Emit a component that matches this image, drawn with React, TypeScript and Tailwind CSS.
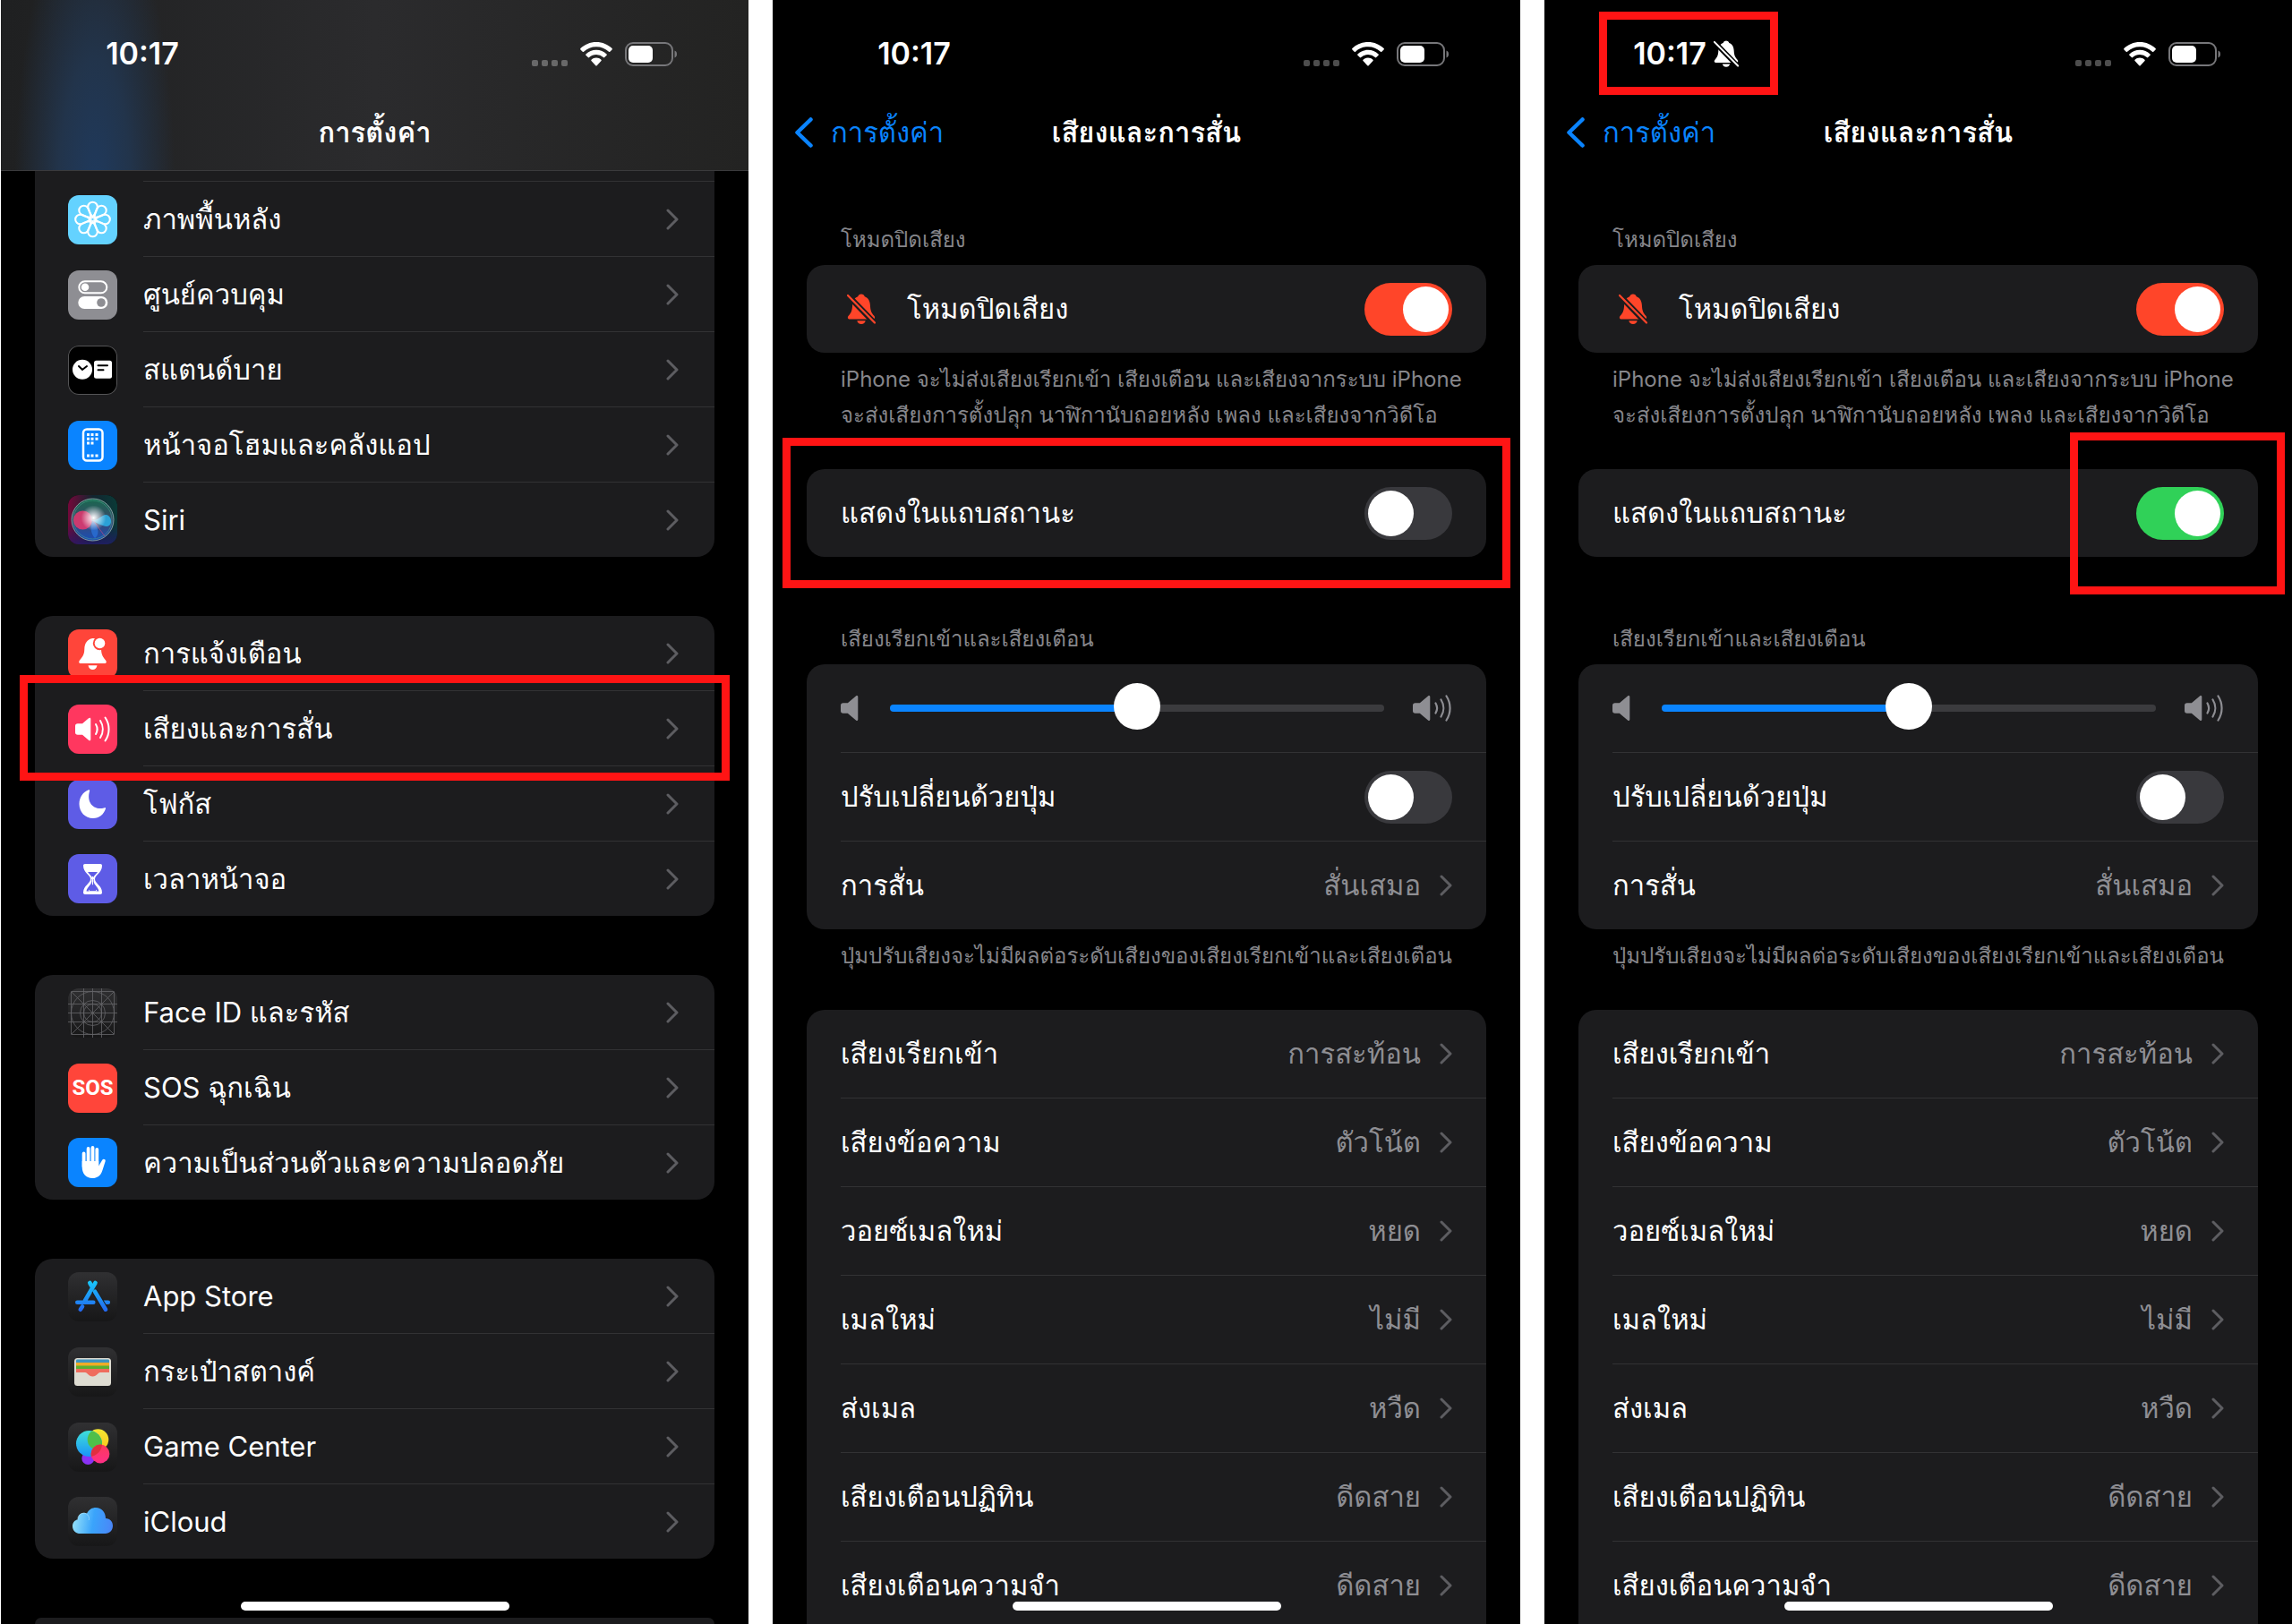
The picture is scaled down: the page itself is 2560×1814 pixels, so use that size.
import { useId, type ReactNode } from "react"
import { clsx } from "clsx"

type Children = { children: ReactNode }

// ---------- Status bar / shared icons ----------

const BellSlash = ({ className }: { className?: string }) => {
    const id = useId()
    return (
        <svg viewBox="0 0 32 34" className={className} aria-hidden="true">
            <mask id={id}>
                <rect width="32" height="34" fill="#fff" />
                <path d="M0 1 31 33" stroke="#000" strokeWidth="6.4" />
            </mask>
            <g mask={`url(#${id})`} fill="currentColor">
                <path d="M16 .5c1.900 0 3.400 1.200 3.800 2.800 4.200 1.500 5.900 5.400 6.100 9.700.3 6 1.500 8.500 4.200 11.500 1.800 2 1.100 4-1.400 4H3.300c-2.500 0-3.200-2-1.400-4C4.600 21.500 5.800 19 6.100 13c.2-4.300 1.900-8.200 6.100-9.700C12.600 1.700 14.100.5 16 .5Z" />
            </g>
            <path d="M11.300 30.200h9.400c-.4 2.300-2.300 3.700-4.700 3.700s-4.300-1.400-4.700-3.700Z" fill="currentColor" />
            <path d="M1 2 31 32.500" stroke="currentColor" strokeWidth="2.300" strokeLinecap="round" />
        </svg>
    )
}

const Wifi = () => (
    <svg viewBox="0 0 36 27" className="h-[27px] w-9" fill="#fff" aria-hidden="true">
        <path d="M18 0c6.900 0 13.100 2.700 17.600 7.100.4.4.4.9 0 1.300l-2.300 2.300c-.4.4-.9.4-1.300 0C28.300 7.200 23.400 5.200 18 5.200S7.700 7.200 4 10.700c-.4.4-.9.4-1.300 0L.4 8.400c-.4-.4-.4-.9 0-1.300C4.900 2.700 11.100 0 18 0Z" />
        <path d="M18 8.800c4.500 0 8.600 1.800 11.600 4.600.4.4.4.9 0 1.300l-2.400 2.400c-.4.4-.9.4-1.300 0A11.600 11.600 0 0 0 18 14c-3 0-5.800 1.200-7.900 3.100-.4.4-.9.4-1.300 0l-2.400-2.400c-.4-.4-.4-.9 0-1.300C9.400 10.600 13.500 8.800 18 8.800Z" />
        <path d="M18 17.600c2.100 0 4 .8 5.500 2.100.4.400.4.900 0 1.300l-4.800 5.300c-.4.400-1 .400-1.400 0L12.500 21c-.4-.4-.4-.9 0-1.300 1.500-1.300 3.400-2.100 5.500-2.100Z" />
    </svg>
)

const Battery = () => (
    <svg viewBox="0 0 58 27" className="h-[27px] w-[58px]" aria-hidden="true">
        <rect x="1" y="1" width="52" height="25" rx="8" fill="none" stroke="#77777a" strokeWidth="2" />
        <path d="M55.500 9.500c2 .7 2.500 2.300 2.500 4s-.5 3.300-2.500 4Z" fill="#77777a" />
        <rect x="4" y="4" width="27" height="19" rx="5" fill="#fff" />
    </svg>
)

const Chevron = () => (
    <svg viewBox="0 0 14 24" className="h-6 w-3.5 shrink-0" fill="none" stroke="#5d5d61" strokeWidth="3" strokeLinecap="round" strokeLinejoin="round" aria-hidden="true">
        <path d="m2 2 10 10L2 22" />
    </svg>
)

const Speaker = () => (
    <svg viewBox="0 0 20 28" className="h-7 w-5 shrink-0" fill="#8e8e93" aria-hidden="true">
        <path d="M0 11c0-1.800 1-2.800 2.800-2.800h5L17 .6c1.200-1 2.300-.4 2.300 1v24.800c0 1.400-1.100 2-2.300 1l-9.200-7.600h-5C1 19.800 0 18.800 0 17Z" />
    </svg>
)

const SpeakerLoud = () => (
    <svg viewBox="0 0 44 30" className="h-[30px] w-11 shrink-0" fill="#8e8e93" aria-hidden="true">
        <path d="M0 12c0-1.800 1-2.800 2.800-2.800h5L17 1.600c1.200-1 2.300-.4 2.300 1v24.800c0 1.400-1.100 2-2.300 1l-9.200-7.600h-5C1 20.800 0 19.800 0 18Z" />
        <g fill="none" stroke="#8e8e93" strokeWidth="2.200" strokeLinecap="round">
            <path d="M25.500 9.500c2 3.400 2 7.600 0 11M31.500 5.500c3.700 5.800 3.700 13.200 0 19M37.500 1.500c5.400 8.200 5.400 18.800 0 27" />
        </g>
    </svg>
)

// ---------- App icons, all on a 55 unit grid ----------

const Glyph = ({ children }: Children) => (
    <svg viewBox="0 0 55 55" className="size-full" aria-hidden="true">{children}</svg>
)

const WallpaperIcon = () => (
    <Glyph>
        <g transform="translate(27.500 27)" fill="none" stroke="#fff" strokeWidth="2.100">
            {[0, 45, 90, 135, 180, 225, 270, 315].map((a) => (
                <path key={a} transform={`rotate(${a})`} d="M0-2.500C-2.500-6-5.300-10-5.300-14a5.300 5.300 0 0 1 10.600 0C5.300-10 2.500-6 0-2.500Z" />
            ))}
        </g>
    </Glyph>
)

const ControlCenterIcon = () => (
    <Glyph>
        <rect x="12.300" y="12.300" width="31" height="13" rx="6.500" fill="none" stroke="#fff" strokeWidth="2" />
        <circle cx="19" cy="18.800" r="4.300" fill="#fff" />
        <rect x="11.300" y="29" width="33" height="14" rx="7" fill="#fff" />
        <circle cx="37" cy="36" r="4.800" fill="#8e8e93" />
    </Glyph>
)

const StandByIcon = () => (
    <Glyph>
        <circle cx="16" cy="26.700" r="11" fill="#fff" />
        <rect x="29" y="16.700" width="20" height="20" rx="2.500" fill="#fff" />
        <path d="m12 23 4 4 5-4M33.500 22.300h10.500M33.500 27.200h6" fill="none" stroke="#000" strokeWidth="2" strokeLinecap="round" />
    </Glyph>
)

const HomeScreenIcon = () => (
    <Glyph>
        <rect x="17" y="9.500" width="21.500" height="35" rx="4" fill="none" stroke="#fff" strokeWidth="2.500" />
        {[[21, 14], [25.500, 14], [30.500, 14], [21, 18.700], [25.500, 18.700], [30.500, 18.700], [21, 23.500], [25.500, 23.500], [21, 37.500], [25.500, 37.500], [30.500, 37.500]].map(([x, y]) => (
            <rect key={`${x}-${y}`} x={x} y={y} width="3" height="3" fill="#fff" />
        ))}
    </Glyph>
)

const SiriIcon = () => (
    <Glyph>
        <defs>
            <linearGradient id="siri-bg" x1="0" y1="0" x2="1" y2="0">
                <stop offset="0" stopColor="#74083a" />
                <stop offset=".5" stopColor="#12242f" />
                <stop offset="1" stopColor="#0a3a37" />
            </linearGradient>
            <linearGradient id="siri-low" x1="0" y1="0" x2="0" y2="1">
                <stop offset=".6" stopColor="#1b1464" stopOpacity="0" />
                <stop offset="1" stopColor="#231a6c" stopOpacity=".8" />
            </linearGradient>
            <radialGradient id="siri-glow">
                <stop offset="0" stopColor="#fff" />
                <stop offset=".25" stopColor="#fff" stopOpacity=".75" />
                <stop offset="1" stopColor="#fff" stopOpacity="0" />
            </radialGradient>
            <linearGradient id="siri-orb" x1="0" y1="0" x2="0" y2="1">
                <stop offset="0" stopColor="#17694e" />
                <stop offset=".5" stopColor="#3a4a6a" />
                <stop offset="1" stopColor="#1a4fb8" />
            </linearGradient>
        </defs>
        <rect width="55" height="55" fill="url(#siri-bg)" />
        <rect width="55" height="55" fill="url(#siri-low)" />
        <circle cx="27.500" cy="27.500" r="23.500" fill="url(#siri-orb)" stroke="#7d9a9c" strokeWidth="1" />
        <circle cx="27.500" cy="27.500" r="21.500" fill="none" stroke="#4fae94" strokeOpacity=".6" strokeWidth=".8" />
        <circle cx="16.500" cy="28" r="10.500" fill="#e8376f" fillOpacity=".85" />
        <path d="M26 28c8 1 12-7 17-6s7 9 3 12-12-2-20-6Z" fill="#29b0e8" fillOpacity=".85" />
        <path d="M28 28c-4 6-3 15 2 20 4-3 6-9-2-20Z" fill="#2a75e0" fillOpacity=".7" />
        <path d="M28 28 41 46" stroke="#d04a86" strokeOpacity=".6" />
        <circle cx="28.500" cy="25.500" r="14" fill="url(#siri-glow)" />
    </Glyph>
)

const NotificationsIcon = () => (
    <Glyph>
        <path d="M27.500 10c-6.500 1-9 6-9.200 12-.2 7-2.500 9-5.300 12.500-1.500 2-.7 3.500 1.300 3.500h26.400c2 0 2.800-1.500 1.300-3.500-2.800-3.500-4.700-5.500-5-12.500C36.700 16 33.500 9.500 27.500 10Z" fill="#fff" />
        <path d="M22.500 40.200h10c-.5 3-2.500 4.800-5 4.800s-4.500-1.800-5-4.800Z" fill="#fff" />
        <circle cx="35.500" cy="15.500" r="7.700" fill="#ff453a" />
        <circle cx="35.500" cy="15.500" r="5.800" fill="#fff" />
    </Glyph>
)

const SoundIcon = () => (
    <Glyph>
        <path d="M8 24c0-1.800 1-2.800 2.800-2.800H16l7-6c1.300-1 2.300-.5 2.300 1v22.600c0 1.500-1 2-2.300 1l-7-6h-5.200C9 33.800 8 32.800 8 31Z" fill="#fff" />
        <path d="M31 22c2 3.400 2 7.600 0 11M36 18c3.700 5.800 3.700 13.200 0 19M41.500 14.500c5.400 8 5.400 18 0 26" fill="none" stroke="#fff" strokeWidth="2" strokeLinecap="round" />
    </Glyph>
)

const FocusIcon = () => (
    <Glyph>
        <path d="M22.500 11.500c1.500-.5 2 .3 1.500 1.500-3 10 2 20 14 19 2.500-.3 4.500-1.500 4 .3C40 38.700 35 43 28 43c-9 0-15.500-7-15.500-16 0-7.500 4.500-13.500 10-15.500Z" fill="#fff" />
    </Glyph>
)

const ScreenTimeIcon = () => (
    <Glyph>
        <path d="M19 11h17c1.300 0 2 .7 2 2 0 8-8 10-8 15s8 7 8 15c0 1.300-.7 2-2 2H19c-1.300 0-2-.7-2-2 0-8 8-10 8-15s-8-7-8-15c0-1.300.7-2 2-2Z" fill="#fff" />
        <path d="M22 20h11c-1.500 2.700-4.500 4-5.500 7.500C26.500 24 23.500 22.700 22 20Z" fill="#5e5ce6" />
        <path d="M20.500 41.500c.8-5 4.800-6 6-11V28h2v2.500c1.200 5 5.200 6 6 11Z" fill="#5e5ce6" />
        <path d="M27.500 25v11l-4.500 5h9l-4.500-5" fill="#fff" stroke="#fff" strokeWidth="1" />
        <path d="M23 38.500 27.500 34l4.500 4.500-1 2.500h-7Z" fill="#5e5ce6" />
    </Glyph>
)

const FaceIdIcon = () => (
    <Glyph>
        <g fill="none" stroke="#66666a" strokeWidth=".8">
            <rect x="3.500" y="3.500" width="48" height="48" />
            <path d="M0 17.500h55M0 27.500h55M0 37.500h55M17.500 0v55M27.500 0v55M37.500 0v55M3.500 3.500l48 48M51.500 3.500l-48 48" />
            <circle cx="27.500" cy="27.500" r="24" />
            <circle cx="27.500" cy="27.500" r="14" />
            <circle cx="27.500" cy="27.500" r="10" />
        </g>
    </Glyph>
)

const PrivacyIcon = () => (
    <Glyph>
        <path d="M17.600 17.500V32M22.600 12v18M27.500 11v18M32.300 13v18" fill="none" stroke="#fff" strokeWidth="3.800" strokeLinecap="round" />
        <path d="M15.700 26h18.500v5.500l4-6.700c1-1.800 4-1 3.500 1.200L38.500 36c-2 6.500-6 9-11.300 9-7.200 0-11.500-5-11.500-12.500Z" fill="#fff" />
    </Glyph>
)

const AppStoreIcon = () => (
    <Glyph>
        <defs>
            <linearGradient id="store" gradientUnits="userSpaceOnUse" x1="0" y1="10" x2="0" y2="44">
                <stop offset="0" stopColor="#18c8fb" />
                <stop offset="1" stopColor="#2366f0" />
            </linearGradient>
        </defs>
        <g fill="none" stroke="url(#store)" strokeWidth="4.600" strokeLinecap="round">
            <path d="M30.500 12 18.800 32M16 38.500l-2.200 3.200M10.300 33.800l18 .01M40 33.800l4.800.01" />
        </g>
        <path d="m29.500 21 12.300 20.700" fill="none" stroke="#1d1d1f" strokeWidth="7" />
        <path d="m24.300 12 1.700 3M30 21.700l12 20" fill="none" stroke="url(#store)" strokeWidth="4.600" strokeLinecap="round" />
    </Glyph>
)

const WalletIcon = () => (
    <Glyph>
        <rect x="7" y="12" width="41" height="31" rx="3.500" fill="#dedcd2" />
        <path d="M10.500 13.500h34c1 0 1.500.5 1.500 1.500v3H9v-3c0-1 .5-1.500 1.500-1.500Z" fill="#3f94bf" />
        <rect x="9" y="17" width="37" height="4" fill="#eeac27" />
        <rect x="9" y="20.500" width="37" height="4" fill="#59b031" />
        <path d="M9 24h37v4H36c-3 0-3.500 4.500-8.500 4.500S22 28 19 28H9Z" fill="#ef6c5e" />
    </Glyph>
)

const GameCenterIcon = () => (
    <Glyph>
        <defs>
            <linearGradient id="gc-blue" x1="0" y1="0" x2="0" y2="1">
                <stop offset="0" stopColor="#3fe0d8" />
                <stop offset="1" stopColor="#1a93f8" />
            </linearGradient>
            <linearGradient id="gc-yellow" x1="0" y1="0" x2="0" y2="1">
                <stop offset="0" stopColor="#f3e833" />
                <stop offset="1" stopColor="#fbc41d" />
            </linearGradient>
            <linearGradient id="gc-pink" x1="0" y1="0" x2="0" y2="1">
                <stop offset="0" stopColor="#fb3a5b" />
                <stop offset="1" stopColor="#ff2f86" />
            </linearGradient>
            <clipPath id="gc-clip"><circle cx="23.500" cy="23.500" r="14.500" /></clipPath>
        </defs>
        <circle cx="22.300" cy="40" r="7" fill="#8a32f5" />
        <circle cx="33.500" cy="19" r="11.800" fill="url(#gc-yellow)" />
        <circle cx="23.500" cy="23.500" r="14.500" fill="url(#gc-blue)" />
        <circle cx="33.500" cy="19" r="11.800" fill="#4fbf4a" clipPath="url(#gc-clip)" />
        <circle cx="36" cy="35" r="10.400" fill="url(#gc-pink)" />
        <circle cx="36" cy="35" r="10.400" fill="#e02f3f" clipPath="url(#gc-clip)" />
    </Glyph>
)

const ICloudIcon = () => (
    <Glyph>
        <defs>
            <linearGradient id="cloud" x1="0" y1=".6" x2="1" y2=".7">
                <stop offset="0" stopColor="#93e0fa" />
                <stop offset=".5" stopColor="#3aa4fb" />
                <stop offset="1" stopColor="#4a86f7" />
            </linearGradient>
        </defs>
        <path d="M14 41c-5.500 0-9-3.500-9-8.300 0-4 2.500-6.700 6-7.400-.3-6 5.500-9.300 10-6.800C23.500 14 27 12 31 12c6.500 0 11 5 11 12 5 .3 8 3.700 8 8.300 0 5-3.500 8.700-8.500 8.700Z" fill="url(#cloud)" />
        <path d="M10.800 25.400C10.500 19 18 16 21.800 20c1.700 2 2 4 1.400 6" fill="none" stroke="#c4eefc" strokeOpacity=".5" strokeWidth="1" />
    </Glyph>
)

// ---------- Building blocks ----------

const Highlight = ({ className }: { className: string }) => (
    <span aria-hidden="true" className={clsx("pointer-events-none absolute z-10 border-[#ff1414]", className)} />
)

const StatusBar = ({ muted }: { muted?: boolean }) => (
    <div className="flex h-[120px] items-center justify-between pr-20">
        <div className="flex w-[316px] justify-center">
            <div className="relative flex items-center gap-2">
                <time className="text-[34px] leading-10 font-semibold">10:17</time>
                {muted && <BellSlash className="h-[30px] w-7" />}
                {muted && <Highlight className="-right-11 -left-[38px] -top-[27px] -bottom-[26px] border-9" />}
            </div>
        </div>
        <div className="flex items-center gap-3.5">
            <span className="flex gap-1 pt-5 opacity-30" aria-hidden="true">
                {[0, 1, 2, 3].map((n) => <i key={n} className="size-[7px] rounded-xs bg-white" />)}
            </span>
            <Wifi />
            <Battery />
        </div>
    </div>
)

const Phone = ({ children }: Children) => (
    <main className="relative flex h-screen flex-col overflow-hidden bg-black">
        {children}
        <span className="absolute bottom-[15px] left-1/2 h-2.5 w-[300px] -translate-x-1/2 rounded-full bg-white" />
    </main>
)

const iconTile = "flex size-[55px] shrink-0 items-center justify-center overflow-hidden rounded-xl"
const darkTile = "bg-linear-to-b from-[#303032] to-[#171718]"

type AppItem = { label: string; tile: string; icon: ReactNode }

const AppRow = ({ label, tile, icon }: AppItem) => (
    <li className="group">
        <a href="#" className="flex items-center pl-[37px]">
            <span className={clsx(iconTile, tile)}>{icon}</span>
            <span className="ml-[29px] flex h-[84px] flex-1 items-center justify-between border-b border-[#323234] pr-10 group-last:h-[83px] group-last:border-b-0">
                {label}
                <Chevron />
            </span>
        </a>
    </li>
)

const general: AppItem[] = [
    { label: "ภาพพื้นหลัง", tile: "bg-[#64d2ff]", icon: <WallpaperIcon /> },
    { label: "ศูนย์ควบคุม", tile: "bg-[#8e8e93]", icon: <ControlCenterIcon /> },
    { label: "สแตนด์บาย", tile: "bg-black ring-1 ring-inset ring-[#545456]", icon: <StandByIcon /> },
    { label: "หน้าจอโฮมและคลังแอป", tile: "bg-[#0a84ff]", icon: <HomeScreenIcon /> },
    { label: "Siri", tile: "bg-black", icon: <SiriIcon /> },
]

const alerts: AppItem[] = [
    { label: "การแจ้งเตือน", tile: "bg-[#ff453a]", icon: <NotificationsIcon /> },
    { label: "เสียงและการสั่น", tile: "bg-[#ff375f]", icon: <SoundIcon /> },
    { label: "โฟกัส", tile: "bg-[#5e5ce6]", icon: <FocusIcon /> },
    { label: "เวลาหน้าจอ", tile: "bg-[#5e5ce6]", icon: <ScreenTimeIcon /> },
]

const security: AppItem[] = [
    { label: "Face ID และรหัส", tile: darkTile, icon: <FaceIdIcon /> },
    { label: "SOS ฉุกเฉิน", tile: "bg-[#ff453a]", icon: <span className="font-[Roboto] text-2xl font-bold">SOS</span> },
    { label: "ความเป็นส่วนตัวและความปลอดภัย", tile: "bg-[#0a84ff]", icon: <PrivacyIcon /> },
]

const services: AppItem[] = [
    { label: "App Store", tile: darkTile, icon: <AppStoreIcon /> },
    { label: "กระเป๋าสตางค์", tile: darkTile, icon: <WalletIcon /> },
    { label: "Game Center", tile: darkTile, icon: <GameCenterIcon /> },
    { label: "iCloud", tile: darkTile, icon: <ICloudIcon /> },
]

const AppList = ({ items }: { items: AppItem[] }) => (
    <ul className="rounded-[20px] bg-[#1c1c1e]">
        {items.map((item) => <AppRow key={item.label} {...item} />)}
    </ul>
)

const SettingsHome = () => (
    <Phone>
        <header className="h-[191px] shrink-0 border-b border-[#3a3a3c] bg-linear-to-r from-[#1f2021] via-[#2b2b2d] via-50% to-[#232322]">
            <div className="h-full bg-[radial-gradient(ellipse_90px_340px_at_105px_115%,#1f3a5e_0%,#22344b_45%,transparent_100%)]">
                <StatusBar />
                <h1 className="text-center leading-[56px] font-semibold">การตั้งค่า</h1>
            </div>
        </header>
        <div className="flex flex-1 flex-col gap-[66px] px-[38px]">
            <ul className="rounded-b-[20px] bg-[#1c1c1e]">
                <li className="ml-[121px] h-3 border-b border-[#323234]" />
                {general.map((item) => <AppRow key={item.label} {...item} />)}
            </ul>
            <div className="relative">
                <AppList items={alerts} />
                <Highlight className="-inset-x-[17px] top-[66px] bottom-[151px] border-9" />
            </div>
            <AppList items={security} />
            <AppList items={services} />
            <div className="flex-1 rounded-t-[20px] bg-[#1c1c1e]" />
        </div>
    </Phone>
)

const cardClass = "rounded-[20px] bg-[#1c1c1e]"
const rowClass = "ml-[38px] flex h-[99px] items-center justify-between border-b border-[#323234] pr-[38px] last:h-[98px] last:border-b-0"

const Toggle = ({ id, on, color }: { id: string; on: boolean; color: string }) => (
    <input
        id={id}
        type="checkbox"
        role="switch"
        defaultChecked={on}
        className={clsx(
            "h-[59px] w-[98px] shrink-0 appearance-none rounded-full bg-[#39393d] p-1 before:block before:size-[51px] before:rounded-full before:bg-white checked:before:translate-x-[39px]",
            color
        )}
    />
)

const sounds = [
    ["เสียงเรียกเข้า", "การสะท้อน"],
    ["เสียงข้อความ", "ตัวโน้ต"],
    ["วอยซ์เมลใหม่", "หยด"],
    ["เมลใหม่", "ไม่มี"],
    ["ส่งเมล", "หวืด"],
    ["เสียงเตือนปฏิทิน", "ดีดสาย"],
    ["เสียงเตือนความจำ", "ดีดสาย"],
]

const ValueRow = ({ label, value }: { label: string; value: string }) => (
    <a href="#" className={rowClass}>
        {label}
        <span className="flex items-center gap-[21px] text-[#8e8e93]">
            {value}
            <Chevron />
        </span>
    </a>
)

const noteClass = "pl-[38px] text-2xl leading-10 text-[#86868b]"

const SoundSettings = ({ id, showInStatusBar }: { id: string; showInStatusBar: boolean }) => (
    <Phone>
        <header className="h-[191px] shrink-0">
            <StatusBar muted={showInStatusBar} />
            <div className="grid grid-cols-[1fr_auto_1fr] items-center px-6 leading-[56px]">
                <a href="#" className="flex items-center gap-5 text-[#0a84ff]">
                    <svg viewBox="0 0 21 34" className="h-[34px] w-[21px]" fill="none" stroke="currentColor" strokeWidth="4.500" strokeLinecap="round" strokeLinejoin="round" aria-hidden="true">
                        <path d="M18.500 2.500 3.500 17l15 14.500" />
                    </svg>
                    การตั้งค่า
                </a>
                <h1 className="font-semibold">เสียงและการสั่น</h1>
            </div>
        </header>
        <div className="flex flex-1 flex-col px-[38px] pt-[57px]">
            <h2 className={clsx(noteClass, "mb-2")}>โหมดปิดเสียง</h2>
            <div className={cardClass}>
                <div className={rowClass}>
                    <label htmlFor={`${id}-silent`} className="flex items-center gap-[35px] pl-[7px]">
                        <BellSlash className="h-[34px] w-8 text-[#ff4529]" />
                        โหมดปิดเสียง
                    </label>
                    <Toggle id={`${id}-silent`} on color="checked:bg-[#ff4529]" />
                </div>
            </div>
            <p className={clsx(noteClass, "mt-2.5")}>
                iPhone จะไม่ส่งเสียงเรียกเข้า เสียงเตือน และเสียงจากระบบ iPhone
                <br />
                จะส่งเสียงการตั้งปลุก นาฬิกานับถอยหลัง เพลง และเสียงจากวิดีโอ
            </p>
            <div className={clsx(cardClass, "relative mt-10")}>
                {showInStatusBar
                    ? <Highlight className="-top-[41px] -right-[30px] -bottom-[42px] w-60 border-9" />
                    : <Highlight className="-inset-x-[27px] -top-[35px] -bottom-[35px] border-9" />}
                <div className={rowClass}>
                    <label htmlFor={`${id}-status`}>แสดงในแถบสถานะ</label>
                    <Toggle id={`${id}-status`} on={showInStatusBar} color="checked:bg-[#30d158]" />
                </div>
            </div>
            <h2 className={clsx(noteClass, "mt-[72px] mb-2")}>เสียงเรียกเข้าและเสียงเตือน</h2>
            <div className={cardClass}>
                <div className={rowClass}>
                    <Speaker />
                    <input
                        type="range"
                        defaultValue={50}
                        aria-label="เสียงเรียกเข้าและเสียงเตือน"
                        className="mr-8 ml-[35px] h-[52px] min-w-0 flex-1 appearance-none bg-transparent [&::-webkit-slider-runnable-track]:h-2 [&::-webkit-slider-runnable-track]:rounded-full [&::-webkit-slider-runnable-track]:bg-linear-to-r [&::-webkit-slider-runnable-track]:from-[#0a84ff] [&::-webkit-slider-runnable-track]:from-50% [&::-webkit-slider-runnable-track]:to-[#3b3b3e] [&::-webkit-slider-runnable-track]:to-50% [&::-webkit-slider-thumb]:-mt-6 [&::-webkit-slider-thumb]:size-[52px] [&::-webkit-slider-thumb]:appearance-none [&::-webkit-slider-thumb]:rounded-full [&::-webkit-slider-thumb]:bg-white"
                    />
                    <SpeakerLoud />
                </div>
                <div className={rowClass}>
                    <label htmlFor={`${id}-buttons`}>ปรับเปลี่ยนด้วยปุ่ม</label>
                    <Toggle id={`${id}-buttons`} on={false} color="checked:bg-[#30d158]" />
                </div>
                <ValueRow label="การสั่น" value="สั่นเสมอ" />
            </div>
            <p className={clsx(noteClass, "mt-2.5")}>ปุ่มปรับเสียงจะไม่มีผลต่อระดับเสียงของเสียงเรียกเข้าและเสียงเตือน</p>
            <div className="mt-10 flex-1 rounded-t-[20px] bg-[#1c1c1e]">
                {sounds.map(([label, value]) => <ValueRow key={label} label={label} value={value} />)}
            </div>
        </div>
    </Phone>
)

const App = () => (
    <div className="grid grid-cols-3 gap-[27px] bg-white pl-px font-[Inter,Loma,sans-serif] text-[31px] leading-[48px] text-white">
        <SettingsHome />
        <SoundSettings id="before" showInStatusBar={false} />
        <SoundSettings id="after" showInStatusBar />
    </div>
)

export default App
